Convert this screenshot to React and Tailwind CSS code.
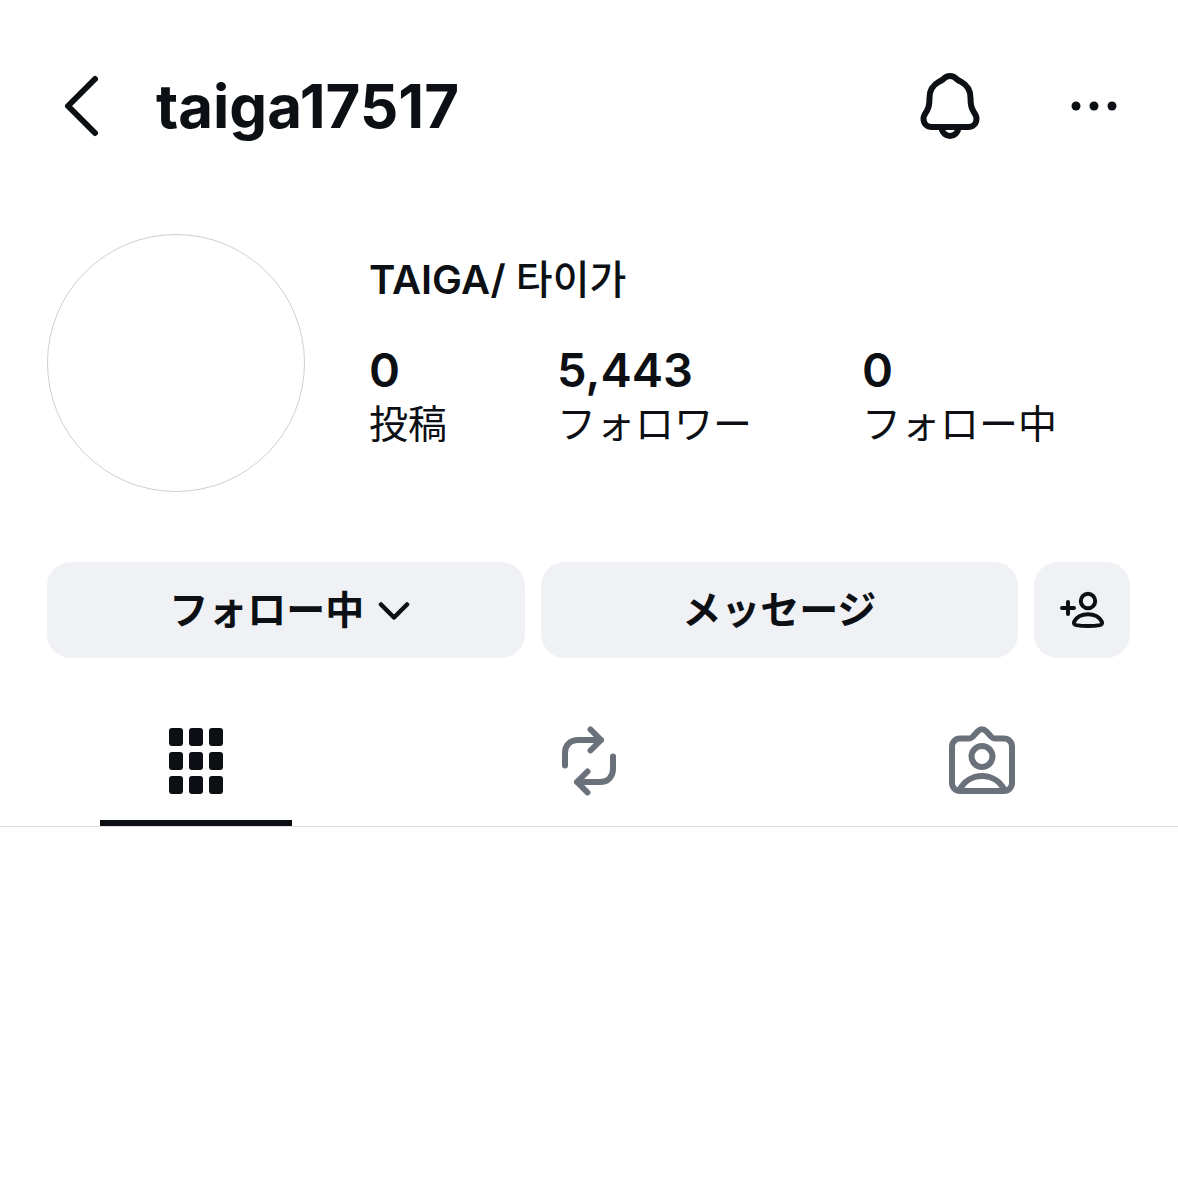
import React from 'react';

const stats = [
  { value: '0', label: '投稿' },
  { value: '5,443', label: 'フォロワー' },
  { value: '0', label: 'フォロー中' },
];

const BackIcon = () => (
  <svg className="size-18" viewBox="0 0 72 72" fill="none" stroke="currentColor" strokeWidth="6" strokeLinecap="round" strokeLinejoin="round">
    <path d="M47 9 20 36l27 27" />
  </svg>
);

const BellIcon = () => (
  <svg className="size-18" viewBox="0 0 72 72" fill="none" stroke="currentColor" strokeWidth="6" strokeLinejoin="round">
    <path d="M36 6c-3 0-5 1.200-6.500 2.900-1.200 1.300-2.700 1.900-4.400 2.800-5.900 3.200-9.600 9.200-9.600 16.200 0 5.600-.4 9.400-2.800 13.200-1.900 3-3.200 4.700-3.200 7.300 0 5.200 3.500 8.600 8.500 8.600h36c5 0 8.500-3.400 8.500-8.600 0-2.600-1.300-4.300-3.200-7.300-2.400-3.800-2.800-7.600-2.800-13.200 0-7-3.700-13-9.600-16.200-1.700-.9-3.200-1.500-4.400-2.800C41 7.200 39 6 36 6Z" />
    <path d="M27.500 58.500c1 4.500 4.500 7.500 8.500 7.500s7.500-3 8.500-7.500" />
  </svg>
);

const MoreIcon = () => (
  <svg className="size-18" viewBox="0 0 72 72" fill="currentColor">
    <circle cx="18" cy="36" r="4.500" />
    <circle cx="36" cy="36" r="4.500" />
    <circle cx="54" cy="36" r="4.500" />
  </svg>
);

const ChevronIcon = () => (
  <svg className="size-8" viewBox="0 0 32 32" fill="none" stroke="currentColor" strokeWidth="4.500" strokeLinecap="round" strokeLinejoin="round">
    <path d="m3 10.500 13 13 13-13" />
  </svg>
);

const AddPersonIcon = () => (
  <svg className="size-12" viewBox="0 0 48 48" fill="none" stroke="currentColor" strokeWidth="4" strokeLinecap="round" strokeLinejoin="round">
    <path d="M4 22h12M10 16v12" />
    <circle cx="30" cy="15" r="7.200" />
    <path d="M30 28.200c-6.500 0-11.800 3.200-13.700 7.200-.9 1.900 0 3.300 1.900 3.700 3.300.6 7.500.9 11.800.9s8.500-.3 11.800-.9c1.900-.4 2.800-1.800 1.900-3.700-1.900-4-7.200-7.200-13.700-7.200Z" />
  </svg>
);

const GridIcon = () => (
  <svg className="size-18" viewBox="0 0 72 72" fill="currentColor">
    {[3, 27, 51].map(y =>
      [9, 29, 49].map(x => <rect key={`${x}-${y}`} x={x} y={y} width="14" height="18" rx="3" />)
    )}
  </svg>
);

const RepostIcon = () => (
  <svg className="size-18" viewBox="0 0 72 72" fill="none" stroke="currentColor" strokeWidth="6" strokeLinecap="round" strokeLinejoin="round">
    <path d="M12 40.500V28c0-7.500 5-13 13-13h23M37.500 4.500 48 15 37.500 25.500" />
    <path d="M60 31.500V44c0 7.500-5 13-13 13H24M34.500 46.500 24 57l10.500 10.500" />
  </svg>
);

const TaggedIcon = () => (
  <svg className="size-18" viewBox="0 0 72 72" fill="none" stroke="currentColor" strokeWidth="6" strokeLinejoin="round">
    <path d="M14 13.500h9c1.500 0 2.500-.5 3.500-1.500l5.500-6c2.500-2.500 5.500-2.500 8 0l5.500 6c1 1 2 1.500 3.500 1.500h9c4.500 0 8 3.500 8 8V58c0 4.500-3.500 8-8 8H14c-4.500 0-8-3.500-8-8V21.500c0-4.500 3.500-8 8-8Z" />
    <circle cx="36" cy="31.500" r="10.500" />
    <path d="M13.500 65c4.500-8.500 12.800-14 22.500-14s18 5.500 22.500 14" />
  </svg>
);

const tabs = [
  { name: 'grid', Icon: GridIcon },
  { name: 'reposts', Icon: RepostIcon },
  { name: 'tagged', Icon: TaggedIcon },
];

const App = () => {
  const [activeTab, setActiveTab] = React.useState('grid');

  return (
    <div className="min-h-screen bg-white pt-[70px] font-['Inter','Noto_Sans_CJK_JP',sans-serif] text-[#0c1014]">
      <header className="flex items-center px-12">
        <button type="button" aria-label="戻る"><BackIcon /></button>
        <h1 className="ml-9 text-[60px] leading-[72px] font-bold">taiga17517</h1>
        <div className="ml-auto flex gap-18">
          <button type="button" aria-label="お知らせ"><BellIcon /></button>
          <button type="button" aria-label="その他"><MoreIcon /></button>
        </div>
      </header>

      <section className="mt-[92px] flex pl-[47px] pr-12">
        <div className="size-[258px] shrink-0 rounded-full border border-[#cfd0d3]" />
        <div className="ml-16 pt-5">
          <h2 className="font-['Inter','Noto_Sans_CJK_KR',sans-serif] text-[40px] leading-[52px] font-semibold">
            TAIGA/ <span lang="ko" className="font-medium">타이가</span>
          </h2>
          <dl className="mt-9 flex gap-[110px]">
            {stats.map(({ value, label }) => (
              <div key={label} className="flex flex-col-reverse">
                <dt className="text-[39px] leading-[52px]">{label}</dt>
                <dd className="text-[47px] leading-[56px] font-semibold">{value}</dd>
              </div>
            ))}
          </dl>
        </div>
      </section>

      <div className="mt-[70px] flex gap-4 pl-[47px] pr-12 text-[39px] font-semibold">
        <button type="button" className="flex h-24 flex-1 items-center justify-center gap-3.5 rounded-3xl bg-[#f0f1f5] pl-2">
          フォロー中
          <ChevronIcon />
        </button>
        <button type="button" className="flex h-24 flex-1 items-center justify-center rounded-3xl bg-[#f0f1f5] px-1">
          メッセージ
        </button>
        <button type="button" aria-label="おすすめ" className="flex size-24 items-center justify-center rounded-3xl bg-[#f0f1f5]">
          <AddPersonIcon />
        </button>
      </div>

      <nav className="mt-[67px] grid grid-cols-3 border-b border-[#dbdde0]">
        {tabs.map(({ name, Icon }) => (
          <button
            key={name}
            type="button"
            aria-label={name}
            onClick={() => setActiveTab(name)}
            className={`flex flex-col items-center gap-[23px] ${activeTab === name ? 'text-[#0c1014]' : 'text-[#6a717a]'}`}
          >
            <Icon />
            <span className={`h-1.5 w-48 ${activeTab === name ? 'bg-[#0c1014]' : 'bg-transparent'}`} />
          </button>
        ))}
      </nav>
    </div>
  );
};

export default App;
